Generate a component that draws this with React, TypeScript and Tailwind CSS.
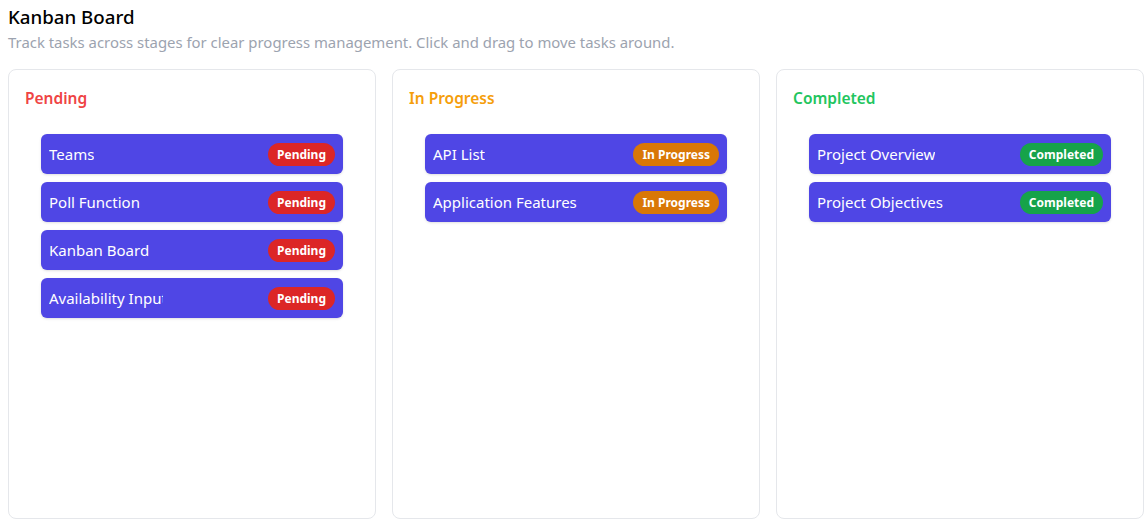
import React from "react";

type Task = { title: string; clip?: boolean };
type Col = {
  name: string;
  head: string;
  badge: string;
  tasks: Task[];
};

const cols: Col[] = [
  {
    name: "Pending",
    head: "text-[#ef4444]",
    badge: "bg-[#dc2626]",
    tasks: [
      { title: "Teams" },
      { title: "Poll Function" },
      { title: "Kanban Board" },
      { title: "Availability Input", clip: true },
    ],
  },
  {
    name: "In Progress",
    head: "text-[#f59e0b]",
    badge: "bg-[#d97706]",
    tasks: [{ title: "API List" }, { title: "Application Features" }],
  },
  {
    name: "Completed",
    head: "text-[#22c55e]",
    badge: "bg-[#16a34a]",
    tasks: [{ title: "Project Overview" }, { title: "Project Objectives" }],
  },
];

export default function App() {
  return (
    <div
      className="bg-white min-h-[525px] px-2 pt-[3px]"
      style={{ fontFamily: '"Segoe UI", "Noto Sans", "Open Sans", sans-serif' }}
    >
      <h1 className="text-[18.7px] leading-[28px] font-medium text-black">Kanban Board</h1>
      <p className="text-[14.9px] leading-[20px] text-[#9ca3af] mt-[1px]">
        Track tasks across stages for clear progress management. Click and drag to move tasks around.
      </p>
      <div className="grid grid-cols-[368px_368px_368px] gap-4 mt-[17px]">
        {cols.map((c) => (
          <div key={c.name} className="h-[450px] rounded-lg border border-[#e5e7eb] p-4">
            <h2 className={`text-[15.5px] leading-[24px] font-semibold ${c.head}`}>{c.name}</h2>
            <div className="mt-2 p-4 flex flex-col gap-2">
              {c.tasks.map((t) => (
                <div
                  key={t.title}
                  className="h-10 rounded-md bg-[#4f46e5] shadow-sm flex items-center justify-between pl-2 pr-2"
                >
                  <span
                    className={`text-[15px] leading-[24px] text-white whitespace-nowrap overflow-hidden ${
                      t.clip ? "max-w-[114px]" : ""
                    }`}
                  >
                    {t.title}
                  </span>
                  <span
                    className={`${c.badge} text-white text-[12px] leading-[16px] font-bold rounded-full px-[9px] pt-[4px] pb-[3px]`}
                  >
                    {c.name}
                  </span>
                </div>
              ))}
            </div>
          </div>
        ))}
      </div>
    </div>
  );
}
